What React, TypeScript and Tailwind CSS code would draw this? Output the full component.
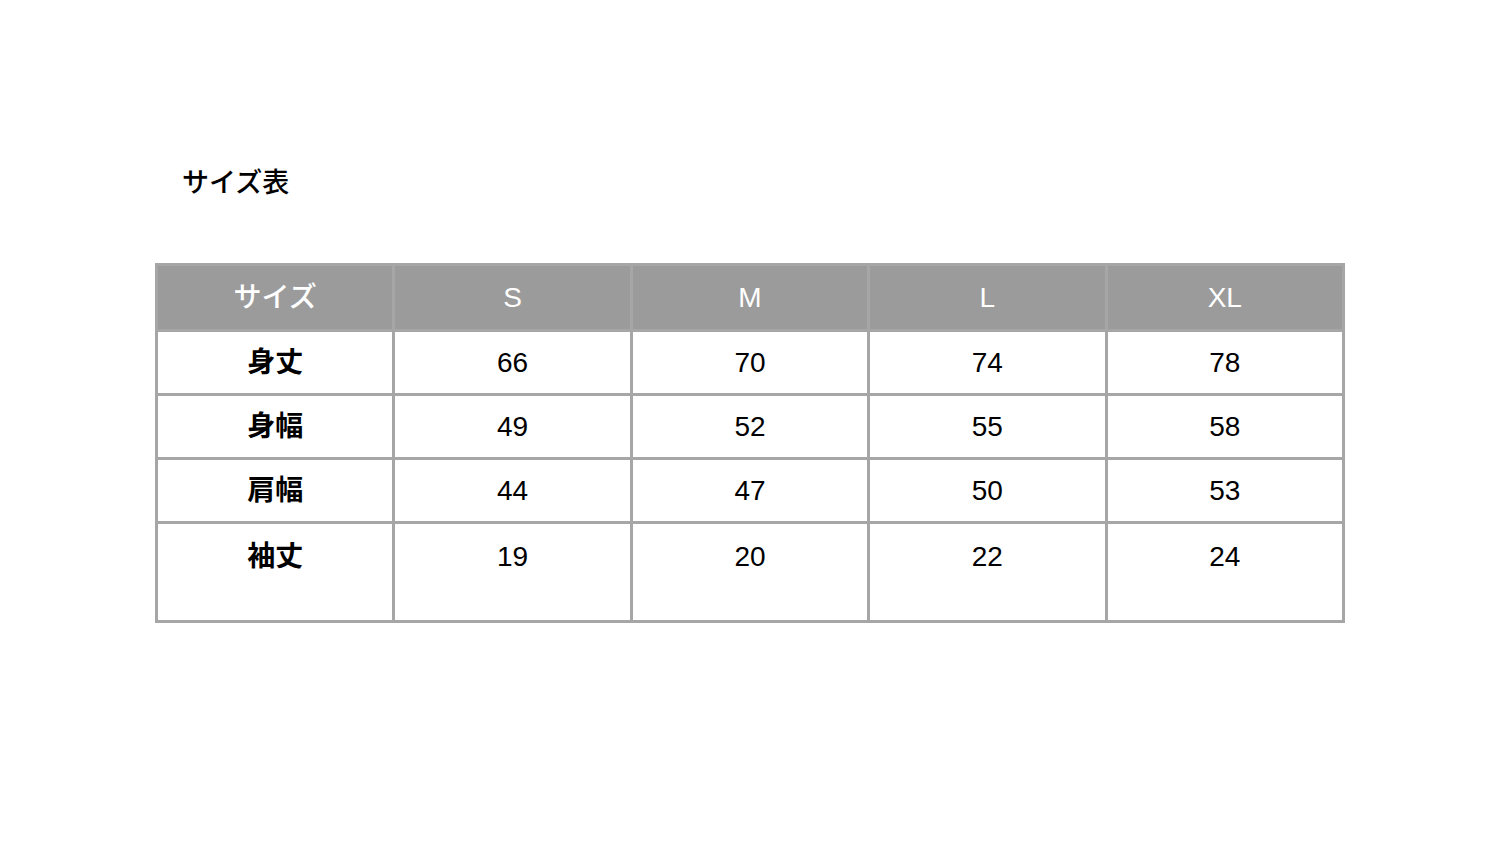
const cols = ["S", "M", "L", "XL"];

const rows = [
  { label: "身丈", values: [66, 70, 74, 78] },
  { label: "身幅", values: [49, 52, 55, 58] },
  { label: "肩幅", values: [44, 47, 50, 53] },
  { label: "袖丈", values: [19, 20, 22, 24] },
];

const jp = "font-['Liberation_Sans','Noto_Sans_CJK_JP',sans-serif]";

export default function App() {
  return (
    <div className={`min-h-[843px] w-[1500px] bg-white text-black ${jp}`}>
      <div className="pl-[182px] pt-[166px] text-[27px] leading-[34px] font-medium">サイズ表</div>
      <div className="ml-[155px] mt-[63px] w-[1190px]">
        <table className="w-full table-fixed border-collapse border-[3px] border-[#a6a6a6] text-center text-[28px]">
          <thead>
            <tr className="h-[66px] bg-[#9b9b9b] text-white">
              <th className="border-[3px] border-[#a6a6a6] font-medium">サイズ</th>
              {cols.map((c) => (
                <th key={c} className="border-[3px] border-[#a6a6a6] font-normal">{c}</th>
              ))}
            </tr>
          </thead>
          <tbody>
            {rows.map((r, i) => {
              const last = i === rows.length - 1;
              return (
                <tr key={r.label} className={last ? "h-[99px]" : "h-[64px]"}>
                  <td className={`border-[3px] border-[#a6a6a6] font-semibold ${last ? "align-top pt-[12px]" : ""}`}>{r.label}</td>
                  {r.values.map((v, j) => (
                    <td key={j} className={`border-[3px] border-[#a6a6a6] ${last ? "align-top pt-[12px]" : ""}`}>{v}</td>
                  ))}
                </tr>
              );
            })}
          </tbody>
        </table>
      </div>
    </div>
  );
}
